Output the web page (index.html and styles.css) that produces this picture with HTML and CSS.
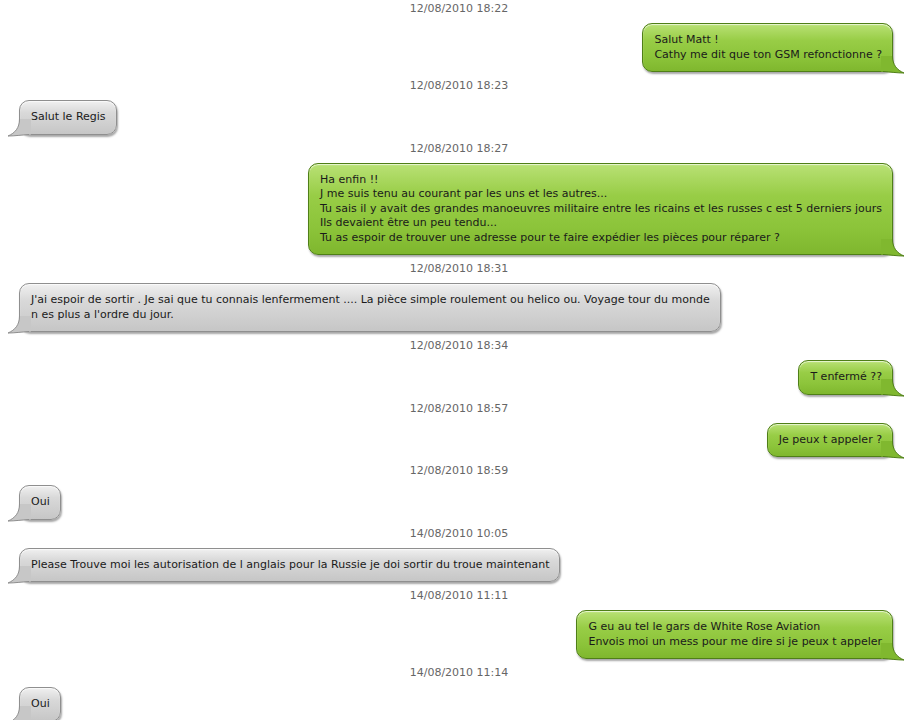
FILE: index.html
```html
<!DOCTYPE html>
<html lang="fr">
<head>
<meta charset="utf-8">
<title>Conversation</title>
<link rel="stylesheet" href="styles.css">
</head>
<body>
<div class="thread">
  <div class="stamp">12/08/2010 18:22</div>
  <div class="bubble out">Salut Matt !<br>Cathy me dit que ton GSM refonctionne ?<svg class="tail" viewBox="0 0 20 18" width="20" height="18"><path class="tf" d="M7.5 0 C7.5 9 12 14 19 17 C12 17 6 16 -4 15.5 L-4 0 Z"/><path class="ts" d="M7.5 0 C7.5 9 12 14 19 17 C12 17 6 16 -2 15.5"/></svg></div>

  <div class="stamp">12/08/2010 18:23</div>
  <div class="bubble in">Salut le Regis<svg class="tail" viewBox="0 0 20 18" width="20" height="18"><path class="tf" d="M12.5 0 C12.5 9 8 14 1 17 C8 17 14 16 24 15.5 L24 0 Z"/><path class="ts" d="M12.5 0 C12.5 9 8 14 1 17 C8 17 14 16 22 15.5"/></svg></div>

  <div class="stamp">12/08/2010 18:27</div>
  <div class="bubble out">Ha enfin !!<br>J me suis tenu au courant par les uns et les autres...<br>Tu sais il y avait des grandes manoeuvres militaire entre les ricains et les russes c est 5 derniers jours<br>Ils devaient être un peu tendu...<br>Tu as espoir de trouver une adresse pour te faire expédier les pièces pour réparer ?<svg class="tail" viewBox="0 0 20 18" width="20" height="18"><path class="tf" d="M7.5 0 C7.5 9 12 14 19 17 C12 17 6 16 -4 15.5 L-4 0 Z"/><path class="ts" d="M7.5 0 C7.5 9 12 14 19 17 C12 17 6 16 -2 15.5"/></svg></div>

  <div class="stamp">12/08/2010 18:31</div>
  <div class="bubble in">J'ai espoir de sortir . Je sai que tu connais lenfermement .... La pièce simple roulement ou helico ou. Voyage tour du monde<br>n es plus a l'ordre du jour.<svg class="tail" viewBox="0 0 20 18" width="20" height="18"><path class="tf" d="M12.5 0 C12.5 9 8 14 1 17 C8 17 14 16 24 15.5 L24 0 Z"/><path class="ts" d="M12.5 0 C12.5 9 8 14 1 17 C8 17 14 16 22 15.5"/></svg></div>

  <div class="stamp">12/08/2010 18:34</div>
  <div class="bubble out">T enfermé ??<svg class="tail" viewBox="0 0 20 18" width="20" height="18"><path class="tf" d="M7.5 0 C7.5 9 12 14 19 17 C12 17 6 16 -4 15.5 L-4 0 Z"/><path class="ts" d="M7.5 0 C7.5 9 12 14 19 17 C12 17 6 16 -2 15.5"/></svg></div>

  <div class="stamp">12/08/2010 18:57</div>
  <div class="bubble out">Je peux t appeler ?<svg class="tail" viewBox="0 0 20 18" width="20" height="18"><path class="tf" d="M7.5 0 C7.5 9 12 14 19 17 C12 17 6 16 -4 15.5 L-4 0 Z"/><path class="ts" d="M7.5 0 C7.5 9 12 14 19 17 C12 17 6 16 -2 15.5"/></svg></div>

  <div class="stamp">12/08/2010 18:59</div>
  <div class="bubble in">Oui<svg class="tail" viewBox="0 0 20 18" width="20" height="18"><path class="tf" d="M12.5 0 C12.5 9 8 14 1 17 C8 17 14 16 24 15.5 L24 0 Z"/><path class="ts" d="M12.5 0 C12.5 9 8 14 1 17 C8 17 14 16 22 15.5"/></svg></div>

  <div class="stamp">14/08/2010 10:05</div>
  <div class="bubble in">Please Trouve moi les autorisation de l anglais pour la Russie je doi sortir du troue maintenant<svg class="tail" viewBox="0 0 20 18" width="20" height="18"><path class="tf" d="M12.5 0 C12.5 9 8 14 1 17 C8 17 14 16 24 15.5 L24 0 Z"/><path class="ts" d="M12.5 0 C12.5 9 8 14 1 17 C8 17 14 16 22 15.5"/></svg></div>

  <div class="stamp">14/08/2010 11:11</div>
  <div class="bubble out">G eu au tel le gars de White Rose Aviation<br>Envois moi un mess pour me dire si je peux t appeler<svg class="tail" viewBox="0 0 20 18" width="20" height="18"><path class="tf" d="M7.5 0 C7.5 9 12 14 19 17 C12 17 6 16 -4 15.5 L-4 0 Z"/><path class="ts" d="M7.5 0 C7.5 9 12 14 19 17 C12 17 6 16 -2 15.5"/></svg></div>

  <div class="stamp">14/08/2010 11:14</div>
  <div class="bubble in">Oui<svg class="tail" viewBox="0 0 20 18" width="20" height="18"><path class="tf" d="M12.5 0 C12.5 9 8 14 1 17 C8 17 14 16 24 15.5 L24 0 Z"/><path class="ts" d="M12.5 0 C12.5 9 8 14 1 17 C8 17 14 16 22 15.5"/></svg></div>
</div>
</body>
</html>
```

FILE: styles.css
```css
html, body {
  margin: 0;
  padding: 0;
  background: #ffffff;
}

body {
  font-family: "DejaVu Sans", Verdana, sans-serif;
  font-size: 11px;
  color: #1a1a1a;
}

.thread {
  display: flex;
  flex-direction: column;
  padding: 2px 14px 0 19px;
}

.stamp {
  align-self: center;
  margin-left: 6px;
  line-height: 14px;
  color: #666666;
  margin-bottom: 7px;
}

.bubble {
  position: relative;
  white-space: nowrap;
  line-height: 14.5px;
  padding: 9px 10px 9px 11px;
  border-radius: 10px;
  margin-bottom: 7px;
  box-shadow: 1px 2px 2px rgba(0, 0, 0, 0.35), inset 0 1px 1px rgba(255, 255, 255, 0.7);
}

.bubble.in {
  align-self: flex-start;
  border: 1px solid #8f8f8f;
  background: linear-gradient(#f0f0f0 0%, #d9d9d9 35%, #cfcfcf 70%, #c6c6c6 100%);
}

.bubble.out {
  align-self: flex-end;
  border: 1px solid #4f7f17;
  background: linear-gradient(#b9e175 0%, #98cd46 35%, #8cc43a 70%, #7fb72e 100%);
}

.tail {
  position: absolute;
  bottom: -3px;
  overflow: visible;
}

.bubble.in .tail {
  left: -13px;
}

.bubble.out .tail {
  right: -13px;
}

.bubble.in .tf { fill: #c7c7c7; }
.bubble.in .ts { fill: none; stroke: #8f8f8f; stroke-width: 1; }
.bubble.out .tf { fill: #80b82f; }
.bubble.out .ts { fill: none; stroke: #4f7f17; stroke-width: 1; }
```
